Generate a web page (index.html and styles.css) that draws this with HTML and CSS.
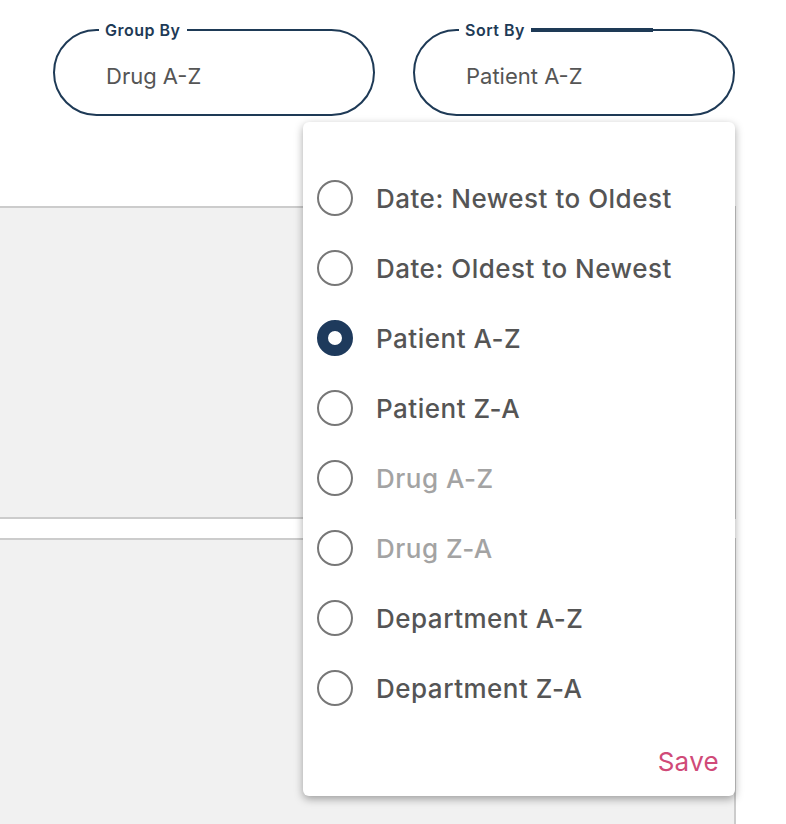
FILE: index.html
```html
<!DOCTYPE html>
<html>
<head>
<meta charset="utf-8">
<link rel="stylesheet" href="styles.css">
</head>
<body>
<div class="page">
  <div class="filters">
    <div class="pill">
      <span class="pill-label">Group By</span>
      <span class="pill-value">Drug A-Z</span>
    </div>
    <div class="pill">
      <span class="pill-label">Sort By</span>
      <span class="pill-accent"></span>
      <span class="pill-value">Patient A-Z</span>
    </div>
  </div>
  <div class="panels">
    <div class="panel panel-first"></div>
    <div class="panel panel-second"></div>
  </div>
  <div class="menu">
    <ul class="options">
      <li class="option"><span class="radio"></span><span class="option-text">Date: Newest to Oldest</span></li>
      <li class="option"><span class="radio"></span><span class="option-text">Date: Oldest to Newest</span></li>
      <li class="option"><span class="radio radio-on"></span><span class="option-text">Patient A-Z</span></li>
      <li class="option"><span class="radio"></span><span class="option-text">Patient Z-A</span></li>
      <li class="option option-disabled"><span class="radio"></span><span class="option-text">Drug A-Z</span></li>
      <li class="option option-disabled"><span class="radio"></span><span class="option-text">Drug Z-A</span></li>
      <li class="option"><span class="radio"></span><span class="option-text">Department A-Z</span></li>
      <li class="option"><span class="radio"></span><span class="option-text">Department Z-A</span></li>
    </ul>
    <div class="menu-footer"><span class="save">Save</span></div>
  </div>
</div>
</body>
</html>
```

FILE: styles.css
```css
* { box-sizing: border-box; }
html, body {
  margin: 0;
  padding: 0;
  background: #ffffff;
  font-family: "Inter", "Liberation Sans", sans-serif;
  overflow: hidden;
}
.page {
  position: relative;
  width: 786px;
  height: 824px;
}
.filters {
  display: flex;
  gap: 38px;
  padding: 29px 0 0 53px;
}
.pill {
  position: relative;
  width: 322px;
  height: 87px;
  border: 2px solid #1e3a56;
  border-radius: 44px;
  display: flex;
  align-items: center;
  padding: 7px 0 0 51px;
}
.pill-label {
  position: absolute;
  top: -12px;
  left: 44px;
  padding: 0 6px;
  background: #fff;
  color: #1e3a56;
  font-size: 16px;
  font-weight: 600;
  letter-spacing: 0.5px;
  line-height: 22px;
}
.pill-accent {
  position: absolute;
  top: -3px;
  left: 116px;
  width: 122px;
  height: 4px;
  background: #1e3a56;
}
.pill-value {
  color: #555555;
  font-size: 22px;
  font-weight: 400;
}
.panels {
  margin-top: 90px;
  display: flex;
  flex-direction: column;
  gap: 19px;
  width: 736px;
}
.panel {
  background: #f1f1f1;
  border-top: 2px solid #cccccc;
  border-right: 2px solid #cccccc;
}
.panel-first {
  height: 313px;
  border-bottom: 2px solid #cccccc;
}
.panel-second {
  height: 300px;
}
.menu {
  position: absolute;
  left: 303px;
  top: 122px;
  width: 432px;
  height: 674px;
  background: #fff;
  border-radius: 6px;
  box-shadow: 0 3px 8px rgba(0, 0, 0, 0.35);
  padding-top: 41px;
}
.options {
  list-style: none;
  margin: 0;
  padding: 0;
}
.option {
  height: 70px;
  display: flex;
  align-items: center;
  padding-left: 14px;
  gap: 23px;
}
.radio {
  width: 36px;
  height: 36px;
  border: 2px solid #777777;
  border-radius: 50%;
  flex: none;
}
.radio-on {
  border: 11px solid #1e3a5c;
}
.option-text {
  color: #555555;
  font-size: 26px;
  font-weight: 500;
  letter-spacing: 0.5px;
}
.option-disabled .option-text {
  color: #a3a3a3;
}
.menu-footer {
  display: flex;
  justify-content: flex-end;
  padding: 23px 16px 0 0;
}
.save {
  color: #d04a78;
  font-size: 26px;
  font-weight: 400;
  letter-spacing: 0.3px;
}
```
